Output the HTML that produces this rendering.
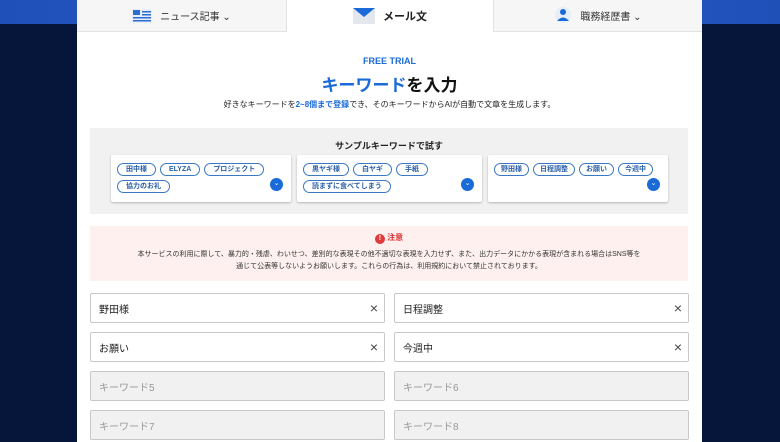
<!DOCTYPE html><html><head><meta charset="utf-8"><style>
*{box-sizing:border-box;margin:0;padding:0}
body{width:780px;height:442px;overflow:hidden;background:#06163a;font-family:"Liberation Sans","Noto Sans CJK JP",sans-serif;position:relative}
.band{position:absolute;left:0;top:0;width:780px;height:24px;background:linear-gradient(90deg,#1f4fb8,#2b63d0 50%,#1f4fb8)}
.wrap{position:absolute;left:77px;top:0;width:625px;height:442px;background:#fff}
.tab{position:absolute;top:0;height:32px;background:#f6f6f6;border-bottom:1px solid #e2e2e2;display:flex;align-items:center;justify-content:center;font-size:10px;color:#333;gap:8px}
.tab.act{background:#fff;border:none;border-left:1px solid #e2e2e2;border-right:1px solid #e2e2e2;font-size:11px;font-weight:bold;color:#222}
.ab{position:absolute;text-align:center;width:625px;left:0}
.gray{position:absolute;left:13px;top:128px;width:598px;height:86px;background:#f1f1f1}
.card{position:absolute;top:27px;height:47px;background:#fff;box-shadow:0 1px 2px rgba(0,0,0,.25);border-radius:2px}
.chips{position:absolute;left:6px;top:8px;width:150px;display:flex;flex-wrap:wrap;gap:4px 4px}
.chip{height:13px;border:1px solid #3b78c4;border-radius:7px;font-size:7px;color:#2a5fa8;font-weight:bold;line-height:11px;padding:0 8px;white-space:nowrap}
.dn{position:absolute;width:13px;height:13px;border-radius:50%;background:#1a6ad8;color:#fff;font-size:7px;text-align:center;line-height:12px}
.pink{position:absolute;left:13px;top:226px;width:598px;height:55px;background:#fdf0ef;text-align:center;font-size:7px;color:#333;line-height:12px}
.in{position:absolute;width:295px;height:30px;border:1px solid #c8c8c8;border-radius:2px;font-size:10px;color:#222;padding:0 8px;display:flex;align-items:center}
.in.g{background:#f1f1f1;color:#999}
.in .x{position:absolute;right:6px;top:6px;font-size:14px;line-height:16px;color:#444}
</style></head><body>
<div class="band"></div>
<div class="wrap">
<div class="tab" style="left:0;width:209px"><svg width="20" height="14"><rect width="20" height="14" fill="#e8eef7"/><rect x="1" y="1" width="7" height="5" fill="#2a6fd0"/><rect x="10" y="2" width="9" height="1.5" fill="#2a6fd0"/><rect x="10" y="5" width="9" height="1.5" fill="#2a6fd0"/><rect x="1" y="8" width="18" height="1.5" fill="#2a6fd0"/><rect x="1" y="11" width="18" height="1.5" fill="#2a6fd0"/></svg>ニュース記事 ⌄</div>
<div class="tab act" style="left:209px;width:208px"><svg width="22" height="16"><rect width="22" height="16" fill="#e4e8ee"/><path d="M0 0H22L11 9Z" fill="#1a6ad8"/></svg>メール文</div>
<div class="tab" style="left:417px;width:208px"><svg width="18" height="20"><circle cx="9" cy="9" r="8" fill="#e6eef8"/><circle cx="9" cy="6" r="3" fill="#1a6ad8"/><path d="M3 15Q9 8 15 15Z" fill="#1a6ad8"/></svg>職務経歴書 ⌄</div>
<div class="ab" style="top:56px;font-size:9px;font-weight:bold;color:#1a6ad8">FREE TRIAL</div>
<div class="ab" style="top:71px;font-size:17px;font-weight:bold;color:#111"><span style="color:#1a6ad8">キーワード</span>を入力</div>
<div class="ab" style="top:99px;font-size:8px;color:#222">好きなキーワードを<b style="color:#1a6ad8">2~8個まで登録</b>でき、そのキーワードからAIが自動で文章を生成します。</div>
<div class="gray">
<div style="position:absolute;top:11px;width:598px;text-align:center;font-size:9px;font-weight:bold;color:#222">サンプルキーワードで試す</div>
<div class="card" style="left:21px;width:180px">
<div class="chips"><span class="chip">田中様</span><span class="chip">ELYZA</span><span class="chip">プロジェクト</span><span class="chip">協力のお礼</span></div><div class="dn" style="left:159px;top:23px">⌄</div></div>
<div class="card" style="left:207px;width:185px">
<div class="chips"><span class="chip">黒ヤギ様</span><span class="chip">白ヤギ</span><span class="chip">手紙</span><span class="chip">読まずに食べてしまう</span></div><div class="dn" style="left:164px;top:23px">⌄</div></div>
<div class="card" style="left:398px;width:180px">
<div class="chips" style="width:172px"><span class="chip" style="padding:0 6px">野田様</span><span class="chip" style="padding:0 6px">日程調整</span><span class="chip" style="padding:0 6px">お願い</span><span class="chip" style="padding:0 6px">今週中</span></div><div class="dn" style="left:159px;top:23px">⌄</div></div>
</div>
<div class="pink"><div style="margin-top:6px;font-size:8px;font-weight:bold;color:#d33"><span style="display:inline-block;width:10px;height:10px;border-radius:50%;background:#e03a3a;color:#fff;line-height:10px;font-size:7px">!</span> 注意</div>
<div style="margin-top:5px">本サービスの利用に際して、暴力的・残虐、わいせつ、差別的な表現その他不適切な表現を入力せず、また、出力データにかかる表現が含まれる場合はSNS等を<br>通じて公表等しないようお願いします。これらの行為は、利用規約において禁止されております。</div></div>
<div class="in" style="left:13px;top:293px">野田様<span class="x">×</span></div>
<div class="in" style="left:317px;top:293px">日程調整<span class="x">×</span></div>
<div class="in" style="left:13px;top:332px">お願い<span class="x">×</span></div>
<div class="in" style="left:317px;top:332px">今週中<span class="x">×</span></div>
<div class="in g" style="left:13px;top:371px">キーワード5</div>
<div class="in g" style="left:317px;top:371px">キーワード6</div>
<div class="in g" style="left:13px;top:410px">キーワード7</div>
<div class="in g" style="left:317px;top:410px">キーワード8</div>
</div>
</body></html>
